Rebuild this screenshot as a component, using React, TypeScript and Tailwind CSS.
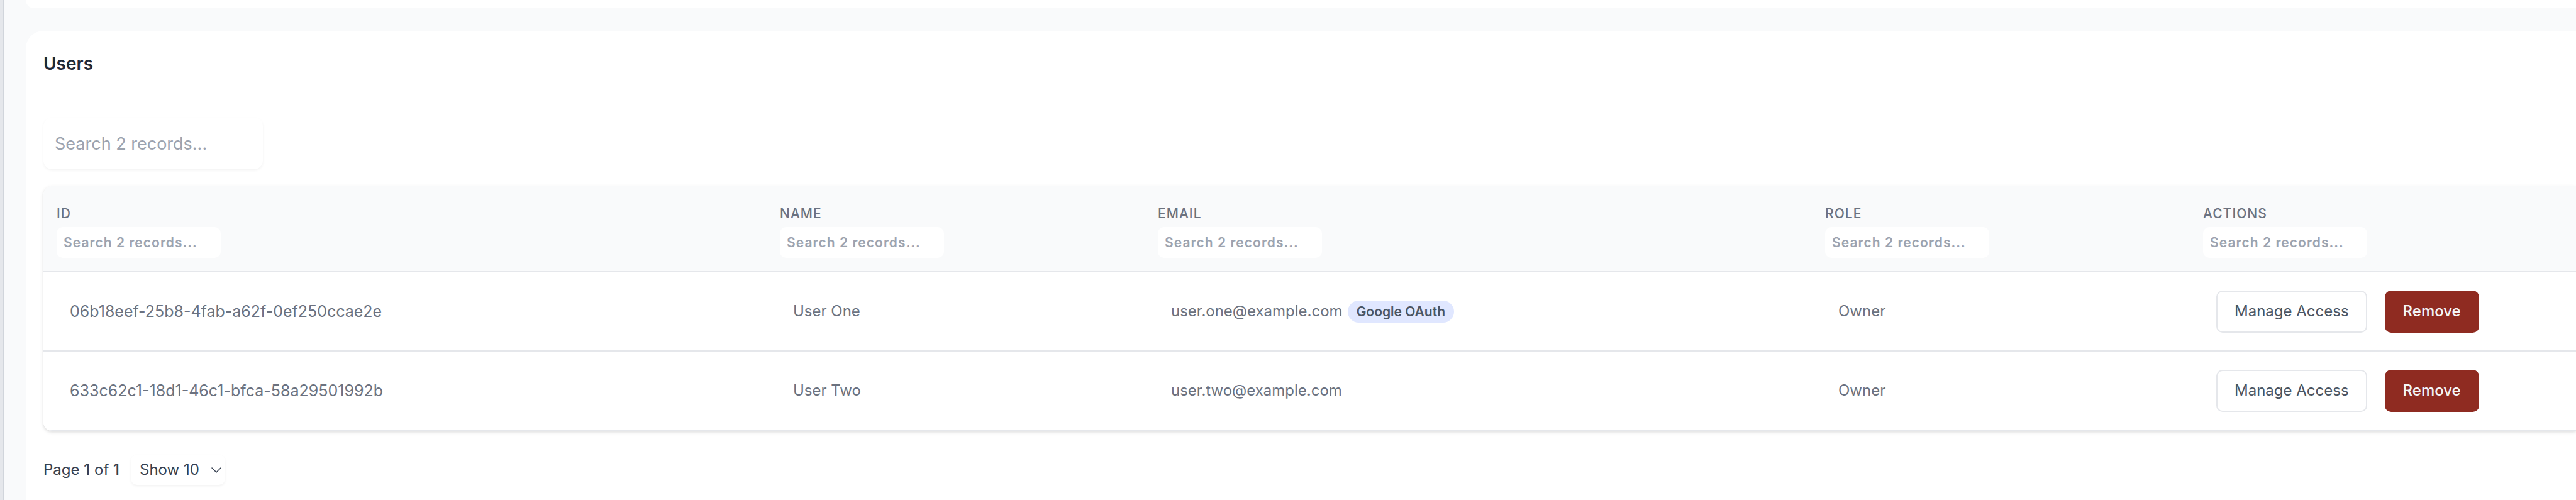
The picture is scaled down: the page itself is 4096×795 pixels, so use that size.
const columns = [
  { id: "id", label: "ID", width: "w-[1150px]" },
  { id: "name", label: "Name", width: "w-[601px]" },
  { id: "email", label: "Email", width: "w-[1061px]" },
  { id: "role", label: "Role", width: "w-[601px]" },
  { id: "actions", label: "Actions", width: "" },
];

const users = [
  {
    id: "06b18eef-25b8-4fab-a62f-0ef250ccae2e",
    name: "User One",
    email: "user.one@example.com",
    provider: "Google OAuth",
    role: "Owner",
  },
  {
    id: "633c62c1-18d1-46c1-bfca-58a29501992b",
    name: "User Two",
    email: "user.two@example.com",
    provider: null,
    role: "Owner",
  },
];

function UsersTable() {
  return (
    <div className="overflow-hidden rounded-l-[14px] shadow-[0_2px_6px_rgba(0,0,0,0.1),0_2px_4px_rgba(0,0,0,0.06)]">
      <table className="w-full table-fixed border-separate border-spacing-0 text-left">
        <thead className="bg-[#f9fafb]">
          <tr>
            {columns.map((column) => (
              <th
                key={column.id}
                scope="col"
                className={`${column.width} border-b-2 border-[#e5e7eb] px-[21px] pt-[30px] pb-[21px] text-[21px] leading-7 font-medium tracking-wider text-[#6b7280]`}
              >
                <label htmlFor={`filter-${column.id}`} className="block uppercase">
                  {column.label}
                </label>
                <input
                  id={`filter-${column.id}`}
                  type="text"
                  placeholder="Search 2 records..."
                  className="mt-[7px] block h-[49px] w-[261px] rounded-[10px] bg-white px-[11px] font-semibold tracking-wider placeholder:text-[#9ca3af]"
                />
              </th>
            ))}
          </tr>
        </thead>
        <tbody className="bg-white text-2xl leading-9 text-[#6b7280]">
          {users.map((user) => (
            <tr key={user.id} className="h-[126px]">
              <td className="border-b-2 border-[#e5e7eb] px-[42px] text-[25px]">{user.id}</td>
              <td className="border-b-2 border-[#e5e7eb] px-[42px]">{user.name}</td>
              <td className="border-b-2 border-[#e5e7eb] px-[42px]">
                <div className="flex items-center gap-2">
                  {user.email}
                  {user.provider && (
                    <span className="rounded-full bg-[#e0e7ff] px-[14px] text-[21px] leading-[35px] font-semibold text-[#4b5563]">
                      {user.provider}
                    </span>
                  )}
                </div>
              </td>
              <td className="border-b-2 border-[#e5e7eb] px-[42px]">{user.role}</td>
              <td className="border-b-2 border-[#e5e7eb] px-[42px]">
                <div className="flex items-center gap-7">
                  <button
                    type="button"
                    className="h-[67px] rounded-[10px] border-2 border-[#e5e7eb] bg-white px-[27px] whitespace-nowrap text-[#4b5563]"
                  >
                    Manage Access
                  </button>
                  <button
                    type="button"
                    className="h-[67px] rounded-[10px] border-2 border-[#8f2b21] bg-[#8f2b21] px-[27px] font-medium text-[#f3f4f6]"
                  >
                    Remove
                  </button>
                </div>
              </td>
            </tr>
          ))}
        </tbody>
      </table>
    </div>
  );
}

function Pagination() {
  return (
    <div className="mt-[38px] flex items-center gap-[18px] text-2xl text-[#374151]">
      <span>
        Page <span className="font-medium">1</span> of <span className="font-medium">1</span>
      </span>
      <div className="relative">
        <select
          aria-label="Rows per page"
          className="h-12 w-[150px] appearance-none rounded-[10px] bg-white pl-[14px] shadow-[0_2px_4px_rgba(0,0,0,0.05)]"
        >
          <option>Show 10</option>
          <option>Show 20</option>
          <option>Show 50</option>
        </select>
        <svg
          viewBox="0 0 16 9"
          className="pointer-events-none absolute top-5 right-[6px] h-[9px] w-4"
          fill="none"
          stroke="#374151"
          strokeWidth="1.5"
          strokeLinecap="round"
          strokeLinejoin="round"
          aria-hidden="true"
        >
          <path d="M1 1l7 7 7-7" />
        </svg>
      </div>
    </div>
  );
}

export default function App() {
  return (
    <div className="flex min-h-screen overflow-hidden bg-[#f9fafb] font-['Inter',sans-serif]">
      <aside className="w-[6px] shrink-0 border-r border-[#d1d5db] bg-[#e5e7eb]" />
      <main className="flex grow flex-col gap-9 pl-[35px]">
        <section className="h-[13px] rounded-bl-[28px] bg-white" />
        <section className="grow rounded-tl-[28px] bg-white pt-[34px] pl-7">
          <h2 className="text-[28px] leading-9 font-semibold text-[#1f2937]">Users</h2>
          <input
            type="text"
            aria-label="Search users"
            placeholder="Search 2 records..."
            className="mt-[68px] mb-[27px] block h-[82px] w-[349px] rounded-[14px] bg-white px-[18px] text-[27px] shadow-[0_2px_4px_rgba(0,0,0,0.05)] placeholder:text-[#9ca3af]"
          />
          <UsersTable />
          <Pagination />
        </section>
      </main>
    </div>
  );
}
